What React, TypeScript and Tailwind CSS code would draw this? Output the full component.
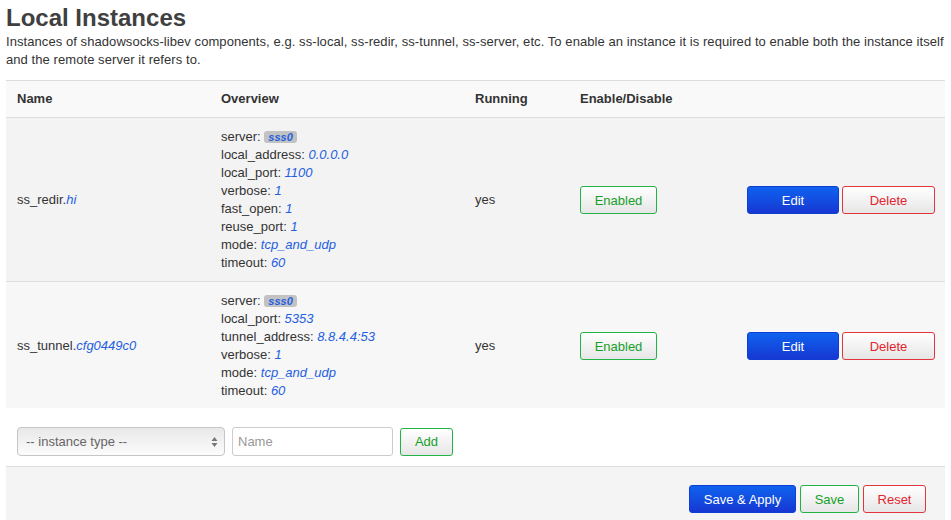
import React from "react"

type Row = {
  type: string
  name: string
  options: [string, string][]
}

const rows: Row[] = [
  {
    type: "ss_redir",
    name: "hi",
    options: [
      ["local_address", "0.0.0.0"],
      ["local_port", "1100"],
      ["verbose", "1"],
      ["fast_open", "1"],
      ["reuse_port", "1"],
      ["mode", "tcp_and_udp"],
      ["timeout", "60"],
    ],
  },
  {
    type: "ss_tunnel",
    name: "cfg0449c0",
    options: [
      ["local_port", "5353"],
      ["tunnel_address", "8.8.4.4:53"],
      ["verbose", "1"],
      ["mode", "tcp_and_udp"],
      ["timeout", "60"],
    ],
  },
]

const btnBase =
  "h-[28px] rounded-[3px] border text-[13px] leading-none flex items-center justify-center bg-gradient-to-b"
const btnPositive = `${btnBase} border-[#22b346] text-[#16a02a] from-white to-[#e6e6e6]`
const btnNegative = `${btnBase} border-[#e2353d] text-[#e0252f] from-white to-[#e6e6e6]`
const btnAction = `${btnBase} border-[#0d3fd2] text-white from-[#0f62ee] to-[#1736d3]`

function SelectArrows() {
  return (
    <svg width="7" height="12" viewBox="0 0 7 12" className="text-[#777]">
      <path d="M3.5 1 L6.5 5 L0.5 5 Z" fill="currentColor" />
      <path d="M3.5 11 L6.5 7 L0.5 7 Z" fill="currentColor" />
    </svg>
  )
}

export default function App() {
  return (
    <div className="w-[951px] h-[520px] overflow-hidden bg-white font-['Liberation_Sans',Arial,sans-serif] text-[13px] leading-[18px] text-[#333]">
      <div className="px-[6px]">
        <h2 className="pt-1 text-[24px] leading-[28px] font-bold text-[#404040]">Local Instances</h2>
        <p className="mt-px whitespace-nowrap tracking-[0.07px]">
          Instances of shadowsocks-libev components, e.g. ss-local, ss-redir, ss-tunnel, ss-server, etc. To enable an instance it is required to enable both the instance itself
          <br />
          and the remote server it refers to.
        </p>

        {/* Table */}
        <div className="mt-[11px] border-t border-[#ddd]">
          <div className="grid grid-cols-[204px_254px_105px_167px_1fr] bg-[#f9f9f9] border-b border-[#ddd] py-[9px] font-bold">
            <div className="pl-[11px]">Name</div>
            <div className="pl-[11px]">Overview</div>
            <div className="pl-[11px]">Running</div>
            <div className="pl-[11px]">Enable/Disable</div>
            <div />
          </div>

          {rows.map((row, i) => (
            <div
              key={row.name}
              className={`grid grid-cols-[204px_254px_105px_167px_1fr] items-center pt-[10px] ${
                i === 0 ? "pb-[9px] bg-[#f3f3f3] border-b border-[#ddd]" : "pb-[8px] bg-[#f7f7f7]"
              }`}
            >
              <div className="pl-[11px]">
                {row.type}.<em className="text-[#1f5fe0]">{row.name}</em>
              </div>
              <div className="pl-[11px]">
                <div>
                  server:{" "}
                  <span className="inline-block rounded-[3px] bg-[#c2c2c2] px-[4px] text-[11px] leading-[12px] font-bold italic text-[#1f5fe0]">
                    sss0
                  </span>
                </div>
                {row.options.map(([k, v]) => (
                  <div key={k}>
                    {k}: <em className="text-[#1f5fe0]">{v}</em>
                  </div>
                ))}
              </div>
              <div className="pl-[11px]">yes</div>
              <div className="pl-[11px]">
                <button className={`${btnPositive} w-[77px]`}>Enabled</button>
              </div>
              <div className="pl-[11px] flex gap-[3px]">
                <button className={`${btnAction} w-[92px]`}>Edit</button>
                <button className={`${btnNegative} w-[93px]`}>Delete</button>
              </div>
            </div>
          ))}
        </div>

        {/* Add instance */}
        <div className="flex items-center gap-[7px] pl-[11px] pt-[19px] pb-[10px]">
          <div className="w-[208px] h-[29px] rounded-[4px] border border-[#c6c6c6] bg-gradient-to-b from-[#e8e8e8] to-[#fcfcfc] flex items-center justify-between pl-[8px] pr-[6px] text-[#666]">
            <span>-- instance type --</span>
            <SelectArrows />
          </div>
          <div className="w-[161px] h-[29px] rounded-[3px] border border-[#ccc] bg-white flex items-center pl-[5px] text-[#999]">
            Name
          </div>
          <button className={`${btnPositive} w-[53px] h-[27px]`}>Add</button>
        </div>

        {/* Footer actions */}
        <div className="border-t border-[#ddd] bg-[#f4f4f4] h-[60px] pt-[18px] pr-[19px] flex justify-end items-start gap-[4px]">
          <button className={`${btnAction} w-[107px]`}>Save &amp; Apply</button>
          <button className={`${btnPositive} w-[59px]`}>Save</button>
          <button className={`${btnNegative} w-[63px]`}>Reset</button>
        </div>
      </div>
    </div>
  )
}
